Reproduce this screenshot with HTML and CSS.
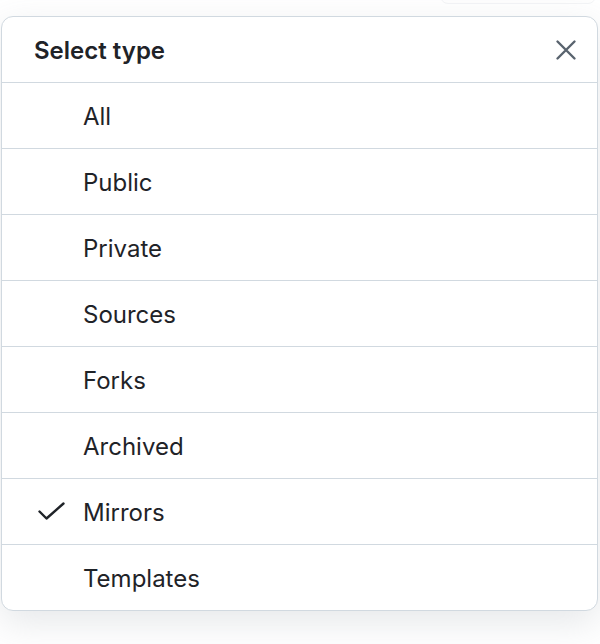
FILE: index.html
```html
<!DOCTYPE html>
<html lang="en">
<head>
<meta charset="utf-8">
<title>Select type</title>
<link rel="stylesheet" href="styles.css">
</head>
<body>
<div class="ghost-button"></div>
<div class="menu" role="dialog" aria-label="Select type">
  <header class="menu-header">
    <h2 class="menu-title">Select type</h2>
    <button class="close-btn" aria-label="Close menu">
      <svg width="24" height="24" viewBox="0 0 24 24" aria-hidden="true"><path d="M3.5 3.5 L20.5 20.5 M20.5 3.5 L3.5 20.5" stroke="#59636e" stroke-width="2.4" stroke-linecap="round" fill="none"/></svg>
    </button>
  </header>
  <ul class="menu-list">
    <li class="menu-item"><span class="check"></span><span class="label">All</span></li>
    <li class="menu-item"><span class="check"></span><span class="label">Public</span></li>
    <li class="menu-item"><span class="check"></span><span class="label">Private</span></li>
    <li class="menu-item"><span class="check"></span><span class="label">Sources</span></li>
    <li class="menu-item"><span class="check"></span><span class="label">Forks</span></li>
    <li class="menu-item"><span class="check"></span><span class="label">Archived</span></li>
    <li class="menu-item selected"><span class="check"><svg width="30" height="20" viewBox="0 0 30 20" aria-hidden="true"><polyline points="2.5,9.5 9.5,16.5 26.5,1.5" stroke="#1f2328" stroke-width="2.4" stroke-linecap="round" stroke-linejoin="round" fill="none"/></svg></span><span class="label">Mirrors</span></li>
    <li class="menu-item"><span class="check"></span><span class="label">Templates</span></li>
  </ul>
</div>
</body>
</html>
```
FILE: styles.css
```css
* { box-sizing: border-box; }
html, body { height: 100%; }
body {
  margin: 0;
  padding: 16px 2px 0 1px;
  background: #ffffff;
  font-family: Inter, "Liberation Sans", sans-serif;
  color: #1f2328;
  position: relative;
  overflow: hidden;
}
.ghost-button {
  position: absolute;
  left: 440px;
  top: -30px;
  width: 156px;
  height: 34px;
  border: 1px solid #f3f4f6;
  border-radius: 8px;
  background: #fefefe;
}
.menu {
  width: 597px;
  background: #fff;
  border: 1px solid #d1d9e0;
  border-radius: 12px;
  box-shadow: 0 12px 36px rgba(140, 149, 159, 0.22);
  overflow: hidden;
  position: relative;
}
.menu-header {
  height: 65px;
  display: flex;
  align-items: center;
  justify-content: space-between;
  padding: 0 17px 0 32px;
}
.menu-title {
  margin: 0;
  font-size: 24px;
  font-weight: 600;
  line-height: 1;
  padding-top: 2px;
}
.close-btn {
  width: 28px;
  height: 28px;
  padding: 0;
  border: 0;
  background: transparent;
  display: flex;
  align-items: center;
  justify-content: center;
}
.menu-list {
  list-style: none;
  margin: 0;
  padding: 0;
}
.menu-item {
  height: 66px;
  border-top: 1px solid #d1d9e0;
  display: flex;
  align-items: center;
  padding-left: 35px;
  font-size: 24px;
}
.check {
  width: 46px;
  height: 20px;
  display: flex;
  align-items: center;
}
.label { line-height: 1; padding-top: 2px; }
```
